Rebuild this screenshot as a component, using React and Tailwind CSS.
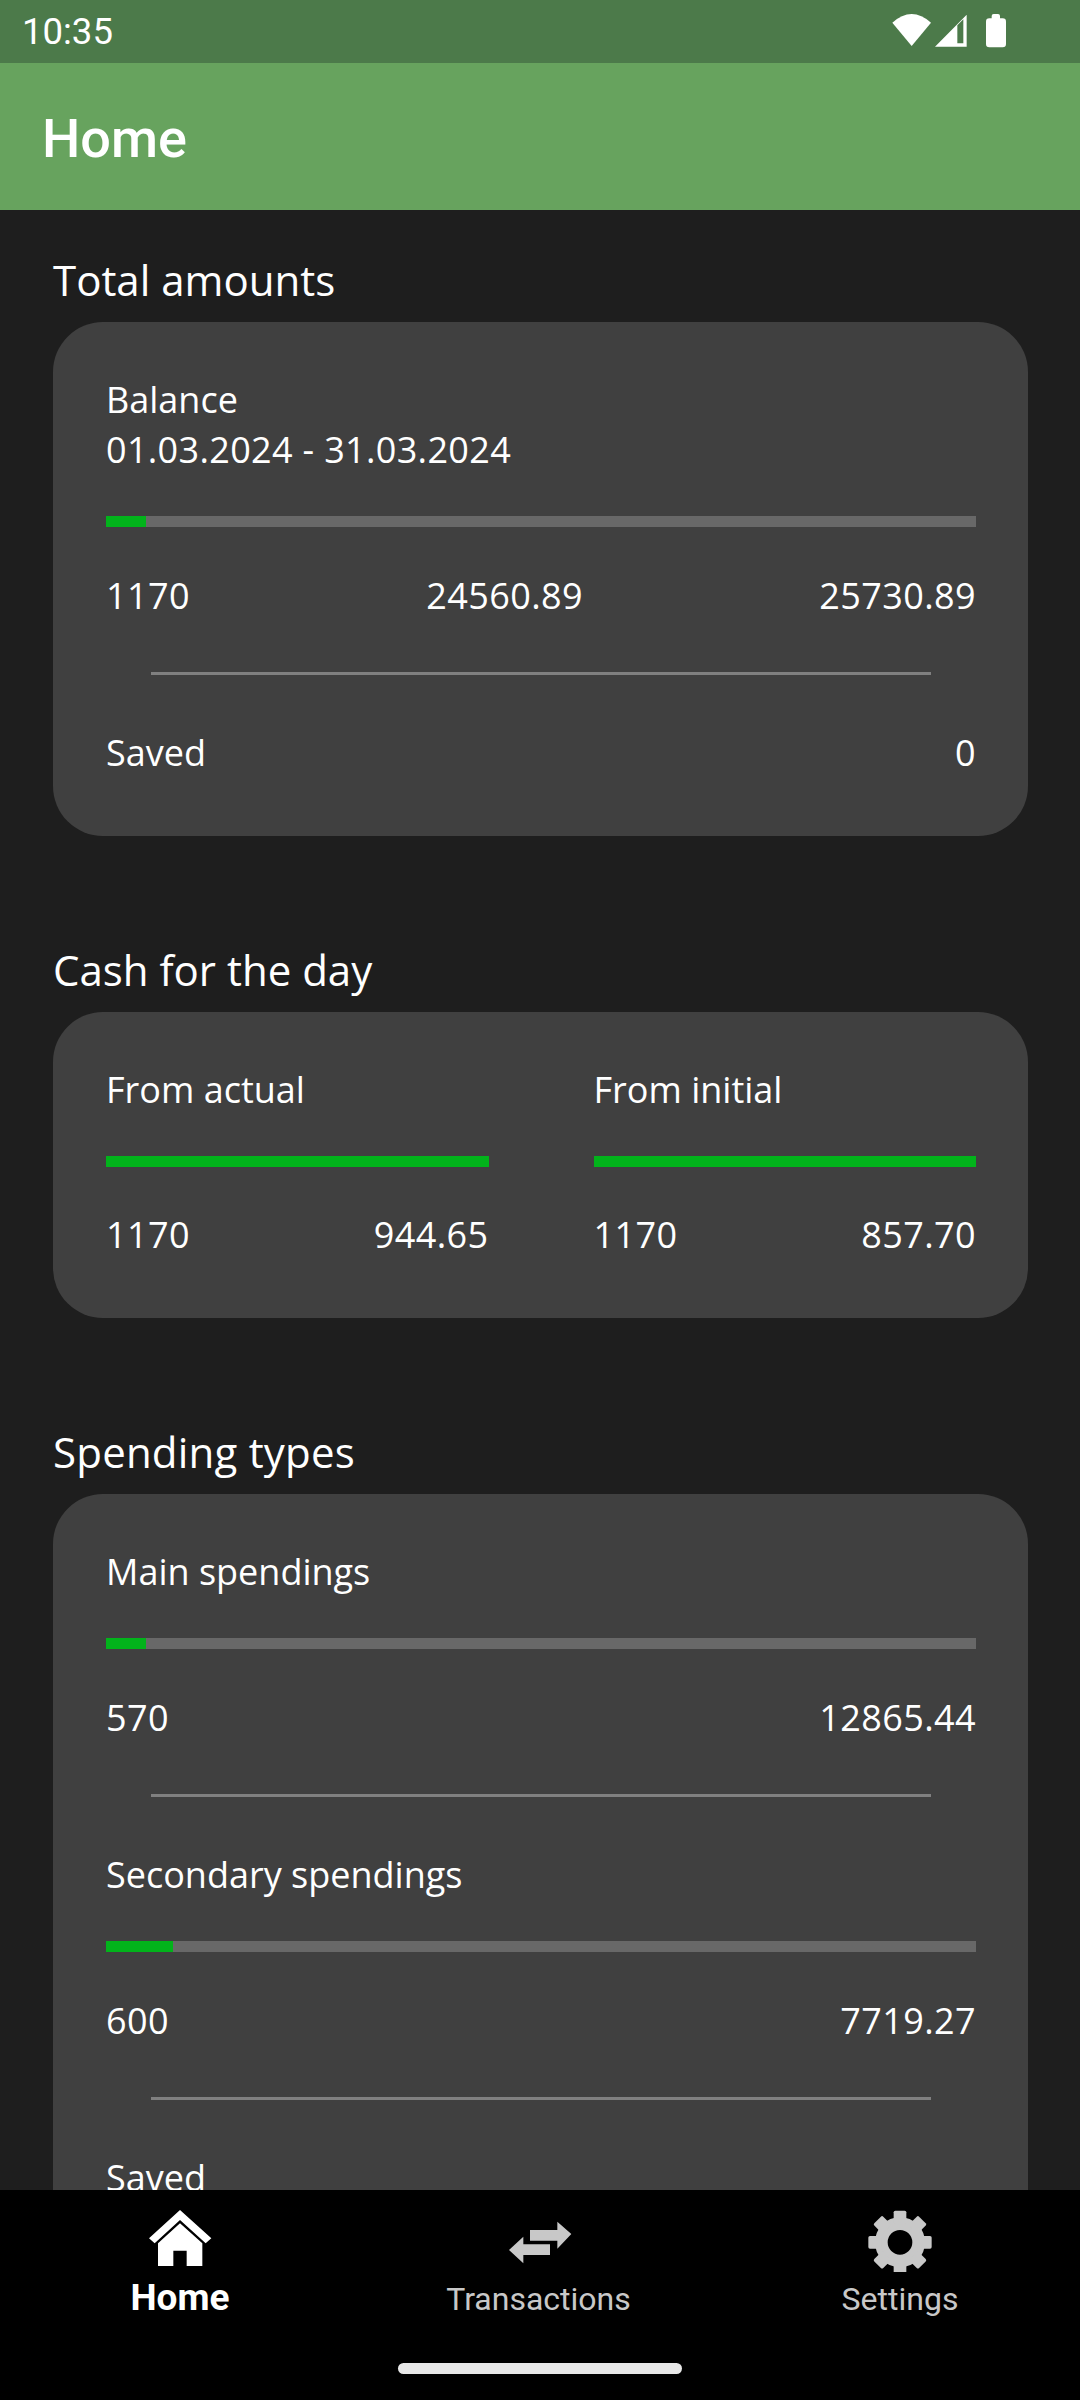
import React from 'react';

const Title = ({ children, className = '' }) => (
  <p className={`text-[42px] leading-[55px] text-white mb-[15px] ${className}`}>{children}</p>
);

const Bar = ({ value }) => (
  <div className="h-[11px] bg-[#686868]">
    <div className="h-full bg-[#02b31b]" style={{ width: value }} />
  </div>
);

const Divider = () => <div className="h-[3px] ml-[45px] mr-[45px] bg-[#808080]" />;

// digits run a little wider in the reference than in the installed Open Sans
const Row = ({ values }) => (
  <div className="flex justify-between">
    {values.map((v) => (
      <span key={v} className={v === 'Saved' ? '' : 'tracking-[0.4px]'}>
        {v}
      </span>
    ))}
  </div>
);

const Spending = ({ label, value, values }) => (
  <div>
    <p>{label}</p>
    <div className="mt-[41px]">
      <Bar value={value} />
    </div>
    <div className="mt-[44px]">
      <Row values={values} />
    </div>
  </div>
);

const CashColumn = ({ label, values }) => (
  <div className="flex-1">
    <p>{label}</p>
    <div className="mt-[41px] h-[11px] bg-[#02b31b]" />
    <div className="mt-[43px]">
      <Row values={values} />
    </div>
  </div>
);

const Card = ({ children }) => (
  <div className="rounded-[50px] bg-[#404040] pl-[53px] pr-[52px] pt-[53px] pb-[58px] text-[36px] leading-[50px] text-white">
    {children}
  </div>
);

const gearTeeth = [0, 45, 90, 135, 180, 225, 270, 315];

const App = () => {
  return (
    <div className="flex h-[2400px] w-[1080px] flex-col overflow-hidden bg-[#1e1e1e] font-['Open_Sans',sans-serif]">
      <div className="flex h-[63px] items-center justify-between bg-[#4c7a4a] pl-[22px] font-['Roboto',sans-serif] text-[36.5px] text-white">
        <span className="pt-[2px]">10:35</span>
        <svg viewBox="0 0 480 192" className="mr-[40px] h-[64px] w-[160px]" fill="white">
          <path d="M37 68 Q95 16 153 68 L95 138 Z" />
          <path
            fillRule="evenodd"
            d="M165 140 L260 44 L260 140 Z M232 76 L232 130 L250 130 L250 58 Z"
          />
          <path d="M335 55 V48 Q335 42 341 42 H354 Q360 42 360 48 V55 H368 Q378 55 378 65 V132 Q378 142 368 142 H328 Q318 142 318 132 V65 Q318 55 328 55 Z" />
        </svg>
      </div>

      <div className="flex h-[147px] items-center bg-[#67a35e] pl-[42px] pt-[3px] font-['Roboto',sans-serif] text-[54px] font-medium text-white">
        Home
      </div>

      <div className="flex-1 overflow-hidden pl-[53px] pr-[52px] pt-[42px]">
        <Title>Total amounts</Title>
        <Card>
          <p>Balance</p>
          <p className="tracking-[0.33px]">01.03.2024 - 31.03.2024</p>
          <div className="mt-[41px]">
            <Bar value="40px" />
          </div>
          <div className="mt-[44px]">
            <Row values={['1170', '24560.89', '25730.89']} />
          </div>
          <div className="mt-[51px]">
            <Divider />
          </div>
          <div className="mt-[53px]">
            <Row values={['Saved', '0']} />
          </div>
        </Card>

        <div className="mt-[106px]">
          <Title>Cash for the day</Title>
          <Card>
            <div className="flex gap-[105px]">
              <CashColumn label="From actual" values={['1170', '944.65']} />
              <CashColumn label="From initial" values={['1170', '857.70']} />
            </div>
          </Card>
        </div>

        <div className="mt-[106px]">
          <Title className="tracking-[0.2px]">Spending types</Title>
          <Card>
            <Spending label="Main spendings" value="40px" values={['570', '12865.44']} />
            <div className="mt-[51px] mb-[53px]">
              <Divider />
            </div>
            <Spending label="Secondary spendings" value="67px" values={['600', '7719.27']} />
            <div className="mt-[51px] mb-[53px]">
              <Divider />
            </div>
            <p>Saved</p>
          </Card>
        </div>
      </div>

      <div className="relative h-[210px] bg-black font-['Roboto',sans-serif]">
        <div className="grid grid-cols-3 pt-[18px]">
          <div className="flex flex-col items-center text-white">
            <svg viewBox="142 54 192 192" className="h-[64px] w-[64px]" fill="currentColor">
              <path d="M238 60 L332 145 L315 160 L238 90 L162 160 L145 145 Z" />
              <path d="M238 100 L305 160 V228 H258 V182 H218 V228 H172 V160 Z" />
            </svg>
            <span className="mt-[6px] text-[37px] leading-[40px] font-bold">Home</span>
          </div>
          <div className="flex flex-col items-center text-[#c8c8c8]">
            <svg viewBox="202 54 192 192" className="h-[64px] w-[64px]" fill="currentColor">
              <path d="M268 120 H350 V95 L392 132 L350 176 V152 H268 Z" />
              <path d="M328 163 H248 V140 L205 180 L248 220 V195 H328 Z" />
            </svg>
            <span className="mt-[7px] mr-[3px] text-[32px] leading-[40px]">Transactions</span>
          </div>
          <div className="flex flex-col items-center text-[#c8c8c8]">
            <svg viewBox="202 54 192 192" className="h-[64px] w-[64px]" fill="currentColor">
              <circle cx="298" cy="157" r="56" fill="none" stroke="currentColor" strokeWidth="38" />
              {gearTeeth.map((angle) => (
                <rect
                  key={angle}
                  x="279"
                  y="62"
                  width="38"
                  height="40"
                  rx="5"
                  transform={`rotate(${angle} 298 157)`}
                />
              ))}
            </svg>
            <span className="mt-[7px] text-[32px] leading-[40px]">Settings</span>
          </div>
        </div>
        <div className="absolute bottom-[26px] left-[398px] h-[11px] w-[284px] rounded-full bg-[#e8e8e8]" />
      </div>
    </div>
  );
};

export default App;
